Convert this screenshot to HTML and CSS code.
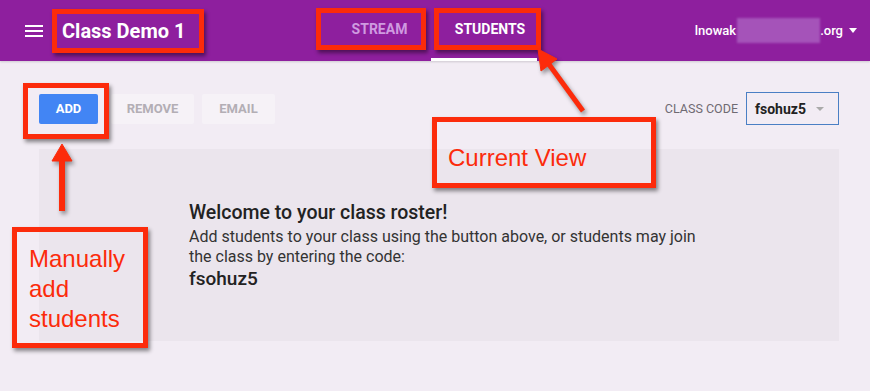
FILE: index.html
```html
<!DOCTYPE html>
<html lang="en">
<head>
    <meta charset="UTF-8">
    <title>Class Demo 1 - Students</title>
    <link rel="stylesheet" href="styles.css">
</head>
<body>

    <header class="topbar">
        <div class="brand">
            <span class="menu-icon"><i></i><i></i><i></i></span>
            <span class="class-name">Class Demo 1</span>
        </div>
        <nav class="tabs">
            <a class="tab tab-stream">STREAM</a>
            <a class="tab tab-students active">STUDENTS</a>
        </nav>
        <div class="account">
            <span class="account-name">lnowak<span class="blur"></span>.org</span>
            <span class="caret"></span>
        </div>
    </header>

    <main class="roster">
        <div class="toolbar">
            <button class="btn btn-add">ADD</button>
            <button class="btn btn-remove">REMOVE</button>
            <button class="btn btn-email">EMAIL</button>
            <div class="class-code">
                <span class="code-label">CLASS CODE</span>
                <div class="code-select">
                    <span>fsohuz5</span>
                    <span class="select-caret"></span>
                </div>
            </div>
        </div>

        <section class="welcome-card">
            <h2>Welcome to your class roster!</h2>
            <p>Add students to your class using the button above, or students may join<br>the class by entering the code:</p>
            <div class="code-big">fsohuz5</div>
        </section>
    </main>

    <!-- annotations drawn over the screenshot -->
    <div class="note note-title"></div>
    <div class="note note-stream"></div>
    <div class="note note-students"></div>
    <div class="note note-add"></div>
    <div class="note note-view"><span>Current View</span></div>
    <div class="note note-manual"><span>Manually<br>add<br>students</span></div>

    <svg class="arrows" width="870" height="391" viewBox="0 0 870 391">
        <g fill="#fc2b0b" stroke="#fc2b0b">
            <line x1="583" y1="111" x2="548" y2="63" stroke-width="5"/>
            <polygon points="538,49 541,71 557,59" stroke-width="1"/>
            <line x1="62" y1="211" x2="62" y2="158" stroke-width="6"/>
            <polygon points="62,144 52,161 72,161" stroke-width="1"/>
        </g>
    </svg>

</body>
</html>
```

FILE: styles.css
```css
body {
    margin: 0;
    width: 870px;
    height: 391px;
    overflow: hidden;
    background: #f2ecf4;
    font-family: Roboto, "Noto Sans", sans-serif;
    color: #222;
    position: relative;
}

.topbar {
    height: 61px;
    background: #8e1f9e;
    display: flex;
    align-items: center;
    box-shadow: 0 1px 2px rgba(0, 0, 0, 0.15);
}

.brand {
    width: 303px;
    padding-left: 25px;
    display: flex;
    align-items: center;
    flex: none;
}

.menu-icon {
    width: 18px;
    display: flex;
    flex-direction: column;
    gap: 3px;
    margin-right: 19px;
}

.menu-icon i {
    display: block;
    height: 2px;
    background: #fff;
}

.class-name {
    color: #fff;
    font-size: 20px;
    font-weight: 700;
    white-space: nowrap;
}

.tabs {
    display: flex;
    height: 61px;
}

.tab {
    height: 61px;
    display: flex;
    align-items: center;
    justify-content: center;
    font-size: 14px;
    font-weight: 700;
    box-sizing: border-box;
    padding-bottom: 3px;
}

.tab-stream {
    width: 103px;
    color: #cf9ae0;
    padding-left: 0;
}

.tab-students {
    width: 106px;
    color: #fff;
    padding-left: 12px;
}

.tab.active {
    border-bottom: 3px solid #fff;
    padding-bottom: 0;
}

.account {
    margin-left: auto;
    padding-right: 13px;
    display: flex;
    align-items: center;
    color: #fff;
    font-size: 13px;
    font-weight: 500;
}

.account-name {
    display: flex;
    align-items: center;
}

.blur {
    display: inline-block;
    width: 83px;
    height: 25px;
    margin: 0 0 0 1px;
    background: #a553b9;
    filter: blur(1px);
}

.caret {
    width: 0;
    height: 0;
    margin-left: 6px;
    border-left: 4px solid transparent;
    border-right: 4px solid transparent;
    border-top: 5px solid #fff;
}

.roster {
    padding: 31px 31px 0 39px;
}

.toolbar {
    display: flex;
    align-items: center;
    height: 33px;
}

.btn {
    height: 30px;
    border: none;
    border-radius: 2px;
    font-family: Roboto, sans-serif;
    font-size: 13px;
    font-weight: 700;
    padding: 0;
    margin-right: 10px;
}

.btn-add {
    width: 59px;
    background: #4285f4;
    color: #fff;
    margin-right: 13px;
}

.btn-remove {
    width: 83px;
    background: #f6f2f7;
    color: #b3aeb5;
    margin-right: 8px;
}

.btn-email {
    width: 73px;
    background: #f6f2f7;
    color: #b3aeb5;
}

.class-code {
    margin-left: auto;
    display: flex;
    align-items: center;
}

.code-label {
    font-size: 12.5px;
    color: #6f6a72;
    margin-right: 8px;
}

.code-select {
    width: 93px;
    height: 33px;
    box-sizing: border-box;
    border: 1px solid #4a7fc4;
    display: flex;
    align-items: center;
    padding-left: 8px;
    font-size: 14px;
    font-weight: 700;
    color: #222;
}

.select-caret {
    width: 0;
    height: 0;
    margin-left: 10px;
    border-left: 4px solid transparent;
    border-right: 4px solid transparent;
    border-top: 4px solid #aaa;
}

.welcome-card {
    margin-top: 24px;
    height: 192px;
    box-sizing: border-box;
    background: #ebe5ed;
    padding: 52px 0 0 150px;
}

.welcome-card h2 {
    margin: 0;
    font-size: 19.5px;
    font-weight: 500;
    line-height: 24px;
    color: #222;
}

.welcome-card p {
    margin: 2px 0 0;
    font-size: 16px;
    line-height: 20px;
    color: #333;
}

.code-big {
    font-size: 19px;
    font-weight: 500;
    line-height: 24px;
    color: #222;
}

/* annotations */
.note {
    position: absolute;
    box-sizing: border-box;
    border: 5px solid #fc2b0b;
    box-shadow: 2px 3px 4px rgba(0, 0, 0, 0.45);
    font-family: "Liberation Sans", Arial, sans-serif;
    color: #fc2b0b;
    font-size: 24px;
}

.note-title { left: 52px; top: 9px; width: 152px; height: 44px; }
.note-stream { left: 316px; top: 8px; width: 110px; height: 42px; }
.note-students { left: 434px; top: 8px; width: 107px; height: 42px; }
.note-add { left: 23px; top: 83px; width: 86px; height: 56px; }

.note-view {
    left: 432px;
    top: 117px;
    width: 224px;
    height: 71px;
    padding: 22px 0 0 11px;
    line-height: 28px;
}

.note-manual {
    left: 12px;
    top: 227px;
    width: 136px;
    height: 121px;
    padding: 12px 0 0 12px;
    line-height: 30px;
}

.arrows {
    position: absolute;
    left: 0;
    top: 0;
    pointer-events: none;
    filter: drop-shadow(2px 3px 2px rgba(0, 0, 0, 0.4));
}
```
